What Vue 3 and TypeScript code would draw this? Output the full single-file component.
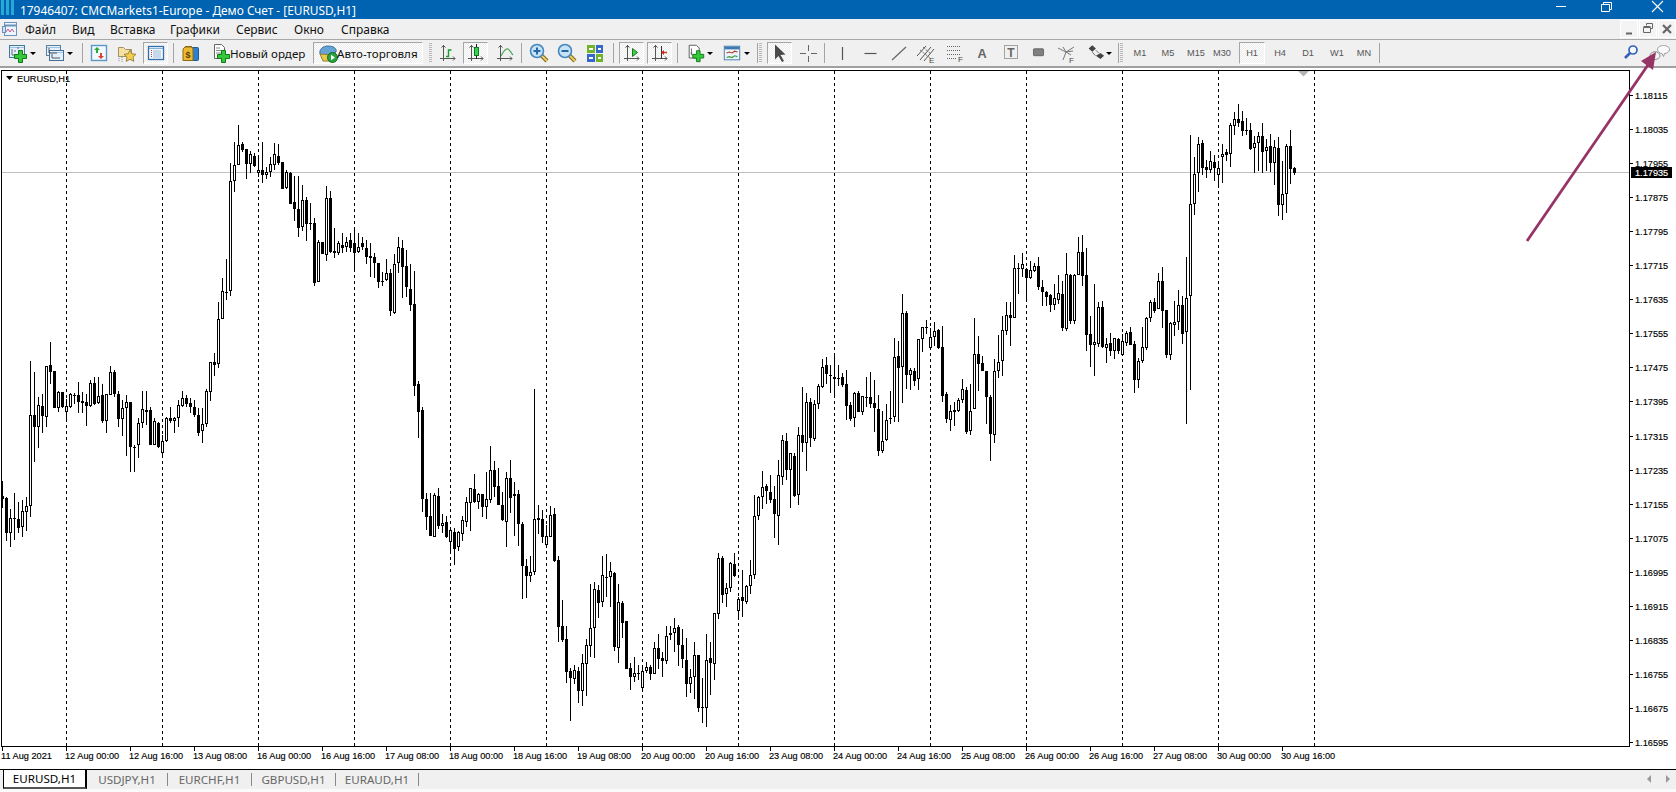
<script setup lang="ts">
type Row = [number, number, number, number, number]
type Crop = { y: number; rows: Row[] }

const crops: Crop[] = [
  { y: 110, rows: [
    [1113,1157,1167,1193,0],[1162,1165,1268,1292,0],[1198,1225,1270,1310,1],[1150,1225,1226,1290,1],[1175,1227,1253,1270,0],[1170,1202,1250,1280,1],[1160,1187,1205,1262,1],[753,916,1187,1220,1],[785,916,950,1055,0],[862,886,950,1013,1],
    [853,888,917,970,0],[767,768,920,950,1],[697,765,785,822,0],[783,783,895,895,0],[843,847,895,905,1],[845,847,890,895,0],[866,889,905,932,1],[850,852,890,895,1],[848,854,855,882,1],[816,856,875,908,0],
    [845,873,878,908,0],[853,877,887,947,0],[810,820,889,890,1],[800,820,882,885,0],[802,858,878,882,1],[823,855,933,940,0],[853,853,933,968,1],[769,787,854,854,1],[781,787,853,862,0],[842,853,928,952,0],
    [870,895,928,977,1],[855,877,895,1037,1],[877,877,1010,1085,0],[1005,1010,1013,1085,0],[925,940,1006,1043,1],[843,898,938,953,1],[843,901,905,945,0],[892,901,1004,1004,0],[925,934,1004,1004,1],[937,940,1010,1013,0],
    [975,994,1028,1040,1],[922,923,992,995,1],[892,923,933,940,0],[920,925,932,968,1],[870,886,925,950,1],[843,865,888,890,1],[855,865,882,890,0],[865,880,890,908,0],[870,892,914,922,0],[895,916,968,977,0],
    [895,943,962,1000,1],[838,844,941,950,1],[755,757,845,873,1],[730,755,765,797,0],[577,626,761,773,1],[505,542,626,626,1],[447,545,546,570,1],[158,212,542,558,1],[95,164,212,245,1],[45,106,164,166,1],
    [97,103,119,127,0],[117,118,161,207,0],[122,132,161,188,1],[130,137,167,172,0],[135,181,188,200,1],[97,181,194,218,0],[170,185,194,208,1],[142,163,185,200,1],[100,133,165,180,1],[103,139,158,165,0],
    [155,157,236,238,0],[180,187,233,236,1],[185,189,281,281,0],[197,277,296,332,0],[198,298,353,381,0],[225,271,350,362,1],[262,271,341,392,0],[278,340,341,360,0],[323,340,519,527,0],[390,397,515,515,1],
    [395,397,431,431,0],[228,265,434,453,1],[243,265,427,430,0],[355,424,428,443,0],[392,400,428,435,1],
  ] },
  { y: 250, rows: [
    [-50,-15,-5,8,0],[-40,-25,-10,5,1],[-50,-30,-5,5,0],[-70,-20,8,60,0],[-50,-10,5,10,1],[-40,-20,-10,0,0],[-30,-5,22,42,0],[-20,18,23,80,0],[10,22,40,83,0],[40,40,95,115,0],
    [67,92,95,107,0],[27,70,91,92,1],[57,70,182,197,0],[13,43,188,193,1],[-40,-10,40,70,1],[-30,-5,52,145,0],[0,48,112,140,0],[42,118,166,182,0],[63,163,407,437,0],[393,403,485,563,0],
    [472,481,748,785,0],[728,748,800,840,0],[728,799,857,857,0],[730,736,860,860,1],[714,739,827,836,0],[792,818,827,848,1],[797,817,862,865,0],[841,841,875,905,1],[835,847,896,945,0],[843,847,892,903,1],
    [797,811,851,873,1],[741,757,815,830,1],[714,715,760,842,1],[672,717,757,760,0],[730,733,755,777,1],[732,733,770,801,0],[666,748,770,807,1],[588,661,749,758,1],[633,661,710,740,0],[655,709,764,764,0],
    [727,764,810,813,0],[667,685,815,890,1],[630,685,743,790,0],[697,731,739,857,1],[720,733,822,887,0],[817,823,947,1048,0],[927,949,977,1043,0],[918,965,977,995,1],[417,808,965,975,1],[766,805,811,852,1],
    [780,808,860,878,0],[825,859,885,890,1],[768,796,860,862,1],[773,793,933,935,0],[918,931,1130,1175,0],[1050,1129,1170,1175,0],[1128,1168,1265,1298,0],[1255,1264,1283,1412,0],[1245,1261,1286,1302,1],[1250,1264,1322,1358,0],
    [1212,1240,1322,1367,1],[1167,1186,1241,1337,1],[1003,1135,1187,1220,1],[996,1018,1135,1223,1],[1005,1020,1058,1105,0],[918,976,1055,1071,1],[912,980,983,1040,0],[937,964,982,1070,1],[965,969,1190,1203,0],[1003,1057,1193,1238,1],
    [1052,1060,1118,1163,0],[1113,1113,1257,1258,0],[1240,1255,1280,1320,0],[1222,1268,1280,1297,1],[1245,1270,1271,1290,1],[1254,1264,1313,1322,1],[1235,1252,1262,1270,1],[1245,1252,1271,1290,0],[1175,1195,1271,1271,1],[1152,1195,1226,1257,0],
    [1207,1225,1232,1280,0],[1128,1157,1232,1242,1],[1127,1148,1154,1170,1],[1105,1133,1148,1205,1],[1125,1132,1184,1247,0],
  ] },
  { y: 280, rows: [
    [1048,1096,1138,1163,0],[1075,1141,1211,1250,0],[1167,1190,1211,1238,1],[1087,1126,1190,1257,1],[1124,1126,1285,1295,0],[1195,1282,1283,1328,1],[1063,1141,1285,1340,1],[1087,1134,1150,1245,0],[998,1000,1153,1200,1],[820,835,1003,1016,1],
    [828,835,946,968,0],[908,925,943,980,1],[847,848,923,935,1],[820,853,887,890,0],[950,958,994,1017,1],[870,952,964,1010,0],[915,919,965,972,1],[840,886,919,942,1],[645,707,886,896,1],[647,652,707,720,1],
    [573,622,652,687,1],[612,619,634,672,0],[585,637,659,668,0],[618,658,703,773,0],[540,586,707,795,1],[465,481,590,614,1],[460,484,569,600,0],[520,520,569,684,1],[520,529,648,650,0],[440,466,644,675,1],
    [321,466,490,516,0],[338,367,490,572,1],[353,367,475,500,0],[360,373,476,483,1],[312,319,373,387,1],[237,260,320,323,1],[232,256,281,312,0],[254,284,285,340,1],[228,292,298,350,1],[255,295,296,318,0],
    [278,292,315,320,0],[270,313,377,420,0],[365,376,416,422,0],[337,340,415,440,1],[334,340,395,395,0],[348,349,395,404,1],[292,352,353,380,1],[277,352,371,385,0],[300,370,385,455,0],[346,388,512,527,0],
    [393,482,512,520,1],[373,421,481,482,1],[333,415,418,431,0],[175,230,412,425,1],[183,229,263,425,0],[42,100,260,368,1],[94,100,284,327,0],[265,271,284,330,1],[265,274,302,318,0],[177,178,298,330,1],
    [140,141,178,215,1],[120,142,143,163,1],[145,170,204,206,1],[127,154,172,198,1],[148,151,204,206,0],[138,202,347,365,0],[335,343,416,428,0],[375,394,419,453,1],[365,389,395,437,1],[355,359,392,395,1],
    [297,328,359,368,1],[322,331,455,463,0],[312,394,452,465,1],[114,221,388,388,1],[168,223,251,333,0],[228,250,272,272,0],[273,274,352,431,0],[345,352,461,542,0],[238,274,466,490,1],[166,247,274,293,1],
  ] },
  { y: 95, rows: [
    [662,706,799,842,1],[620,661,709,720,1],[620,660,670,752,0],[480,520,670,670,1],[505,520,521,597,1],[475,508,523,545,1],[520,523,550,617,0],[498,526,549,552,1],[505,514,527,532,1],[487,514,575,585,0],
    [555,577,592,632,0],[588,592,605,632,0],[597,601,629,650,0],[567,610,629,645,1],[540,595,614,627,1],[558,598,698,707,0],[475,538,701,707,1],[538,541,677,687,0],[538,539,677,687,1],[426,472,539,540,1],
    [420,472,542,572,0],[459,541,719,768,0],[663,718,749,816,0],[567,742,749,842,1],[620,637,747,755,1],[618,637,757,758,0],[730,748,758,803,1],[713,745,767,782,0],[730,730,767,792,1],[730,733,767,777,0],
    [717,737,779,783,1],[708,715,743,752,1],[696,712,749,750,0],[737,748,855,893,0],[790,799,854,878,1],[697,757,797,803,1],[665,669,759,765,1],[615,622,670,680,1],[610,622,647,655,0],[535,558,641,641,1],
    [516,558,647,698,0],[645,646,780,790,0],[680,685,781,794,1],[618,680,689,722,1],[585,630,680,705,1],[604,630,716,746,0],[487,610,710,986,1],[120,328,602,885,1],[186,238,326,360,1],[126,146,233,290,1],
    [136,145,218,240,0],[195,217,224,250,0],[168,199,226,235,1],[180,202,219,258,0],[205,220,239,280,1],[148,176,185,265,1],[163,172,179,197,0],[83,91,176,215,1],[50,73,92,120,1],[28,73,83,95,0],
    [48,79,107,122,0],[70,106,107,120,1],[85,106,161,165,0],[122,145,158,233,1],[110,122,145,228,1],[85,124,170,233,0],[133,155,167,228,1],[118,154,203,232,0],[135,157,203,270,1],[125,160,329,362,0],
    [197,298,329,375,1],[147,154,298,353,1],[105,154,221,266,0],[215,220,233,240,0],
  ] },
]

let wickPath = ''
let fillPath = ''
let hollowPath = ''
let index = 0
for (const crop of crops) {
  const py = (v: number) => crop.y + Math.round(v / 3)
  for (const [hi, top, bot, lo, up] of crop.rows) {
    const x = 2 + 4 * index++
    const t = py(top)
    const h = Math.max(1, py(bot) - t)
    wickPath += `M${x + 0.5} ${py(hi)}V${py(lo)}`
    if (up && h > 1) hollowPath += `M${x - 0.5} ${t + 0.5}h2v${h - 1}h-2z`
    else fillPath += `M${x - 1} ${t}h3v${h}h-3z`
  }
}

const dashes = Array.from({ length: 14 }, (_, i) => 66.5 + 96 * i)

const timeLabels = ['11 Aug 2021', '12 Aug 00:00', '12 Aug 16:00', '13 Aug 08:00', '16 Aug 00:00', '16 Aug 16:00', '17 Aug 08:00', '18 Aug 00:00', '18 Aug 16:00', '19 Aug 08:00', '20 Aug 00:00', '20 Aug 16:00', '23 Aug 08:00', '24 Aug 00:00', '24 Aug 16:00', '25 Aug 08:00', '26 Aug 00:00', '26 Aug 16:00', '27 Aug 08:00', '30 Aug 00:00', '30 Aug 16:00']
  .map((text, i) => ({ text, x: 2 + 64 * i }))

const priceLabels = Array.from({ length: 20 }, (_, i) => ({
  text: (1.18115 - 0.0008 * i).toFixed(5),
  y: Math.round(95 + 34.05 * i),
}))

const menu = [
  { t: 'Файл', w: 47 }, { t: 'Вид', w: 38 }, { t: 'Вставка', w: 60 }, { t: 'Графики', w: 66 },
  { t: 'Сервис', w: 58 }, { t: 'Окно', w: 47 }, { t: 'Справка', w: 60 },
]
const tabs = [
  { t: 'USDJPY,H1', w: 81 }, { t: 'EURCHF,H1', w: 84 }, { t: 'GBPUSD,H1', w: 84 }, { t: 'EURAUD,H1', w: 83 },
]

const axes = '<path d="M6.5 3v16M3 16.5h15M4.5 5.5l2-2 2 2M16 14.5l2 2-2 2" stroke="#555" fill="none"/>'
const win = (x: number, y: number, w: number, h: number, c: string) =>
  `<rect x="${x}.5" y="${y}.5" width="${w}" height="${h}" fill="#e4f1fb" stroke="${c}"/><path d="M${x + 1} ${y + 2}.5h${w - 1}" stroke="#9cc4e4"/>`
const plus = (x: number, y: number) =>
  `<path d="M${x + 3.5} ${y + 0.5}h4v4h4v4h-4v4h-4v-4h-4v-4h4z" fill="#35c93a" stroke="#0e7a18"/>`
const lens = (inner: string) =>
  `<path d="M13 13l6 6" stroke="#7a6420" stroke-width="4"/><path d="M13 13l6 6" stroke="#f0cf60" stroke-width="2"/><circle cx="9" cy="9" r="6.5" fill="#c6e2f6" stroke="#4487bd" stroke-width="1.6"/><path d="${inner}" stroke="#2568a8" stroke-width="2" fill="none"/>`
const small = (t: string, x: number, y: number) =>
  `<text x="${x}" y="${y}" font-size="8" font-family="Liberation Sans" fill="#444">${t}</text>`

const icons: Record<string, string> = {
  newchart: win(3, 3, 15, 12, '#44799f') + '<path d="M6 7v6h8M8 9h2M11 6h2" stroke="#667" fill="none"/>' + plus(9, 8),
  profiles: win(3, 3, 14, 10, '#55829f') + win(6, 8, 14, 10, '#44709a') + '<path d="M6 6v5h8M9 12v4h8" stroke="#556" fill="none"/>',
  watch: '<rect x="3.5" y="3.5" width="15" height="15" fill="#f2f8fd" stroke="#5b9ac8" stroke-width="1.4"/><path d="M9 5l3 3h-2v3H8V8H6z" fill="#2aa83a"/><path d="M13 17l-3-3h2v-3h2v3h2z" fill="#d8452c"/>',
  star: '<path d="M2.5 5.5h5l2 2h6v7h-13z" fill="#f6e0a4" stroke="#a39362"/><path d="M3 14v5M6 15v5" stroke="#888" stroke-dasharray="1 1"/><path d="M14 8l1.8 3.8 4.2.5-3 2.9.8 4.1-3.8-2-3.8 2 .8-4.1-3-2.9 4.2-.5z" fill="#f6cc4c" stroke="#9b8540"/>',
  nav: '<rect x="3.5" y="4.5" width="15" height="13" fill="#f4f9fe" stroke="#2f6fae" stroke-width="1.3"/><path d="M4 6.5h14" stroke="#7fb0dc"/><path d="M6.5 8v8" stroke="#c33" stroke-dasharray="1 1"/><path d="M8 9h8M8 11h8M8 13h8M8 15h8" stroke="#99b8d8"/>',
  money: '<rect x="9.5" y="5.5" width="9" height="13" rx="1" fill="#2f7fd0" stroke="#1c5c9c"/><path d="M5 5h7l1 2v11.500H3V7z" fill="#eeb830" stroke="#8a6a14"/><path d="M5 4.500h7" stroke="#8a6a14"/><text x="8" y="16" text-anchor="middle" font-size="9" font-weight="700" font-family="Liberation Sans" fill="#5a4208">$</text>',
  order: '<path d="M4.500 2.500h7l3 3v11h-10z" fill="#fff" stroke="#666"/><path d="M6 6h4M6 8.500h7M6 11h6" stroke="#888"/>' + plus(8, 8),
  auto: '<path d="M3 12c-1-5 3-8 8-8s9 2 8 6c-2 2-12 4-16 2z" fill="#67a4d6" stroke="#3e6f9a"/><path d="M3 12l3 7h8l3-6z" fill="#e9c94d" stroke="#94802e"/><circle cx="15.500" cy="15.500" r="5" fill="#27a33d" stroke="#146a24"/><path d="M14 12.800l4 2.700-4 2.700z" fill="#fff"/>',
  bar: axes + '<path d="M9 14.500h2.500V8H14.500" stroke="#1a9a2a" stroke-width="1.4" fill="none"/>',
  candle: axes + '<path d="M11.500 2v15" stroke="#222"/><rect x="9.500" y="5.500" width="4" height="8" fill="#2fd64a" stroke="#137a24"/>',
  line: axes + '<path d="M7 14c3-6 5-8 7-7s3 4 5 6" stroke="#4aa45a" stroke-width="1.2" fill="none"/>',
  zoomin: lens('M5.500 9h7M9 5.500v7'),
  zoomout: lens('M5.500 9h7'),
  tile: '<rect x="3" y="3" width="8" height="8" fill="#6fb52a"/><rect x="12" y="3" width="7" height="8" fill="#3568c8"/><rect x="3" y="12" width="8" height="8" fill="#3568c8"/><rect x="12" y="12" width="7" height="8" fill="#6fb52a"/><path d="M5 6h4v2H5zM14 6h3v2h-3zM5 15h4v2H5zM14 15h3v2h-3z" fill="#fff"/>',
  scroll: axes + '<path d="M11.500 6.500l5 4-5 4z" fill="#3ed04a" stroke="#157a22"/>',
  shift: axes + '<path d="M12.500 4v13" stroke="#333"/><path d="M18 10.500h-5" stroke="#c8301e" stroke-width="1.4"/><path d="M12 10.500l3-2.500v5z" fill="#c8301e"/>',
  template: '<path d="M3.500 2.500h8l3 3v11h-11z" fill="#fff" stroke="#555"/><path d="M6 6v7h5M5 11h2" stroke="#666" fill="none"/>' + plus(8, 8),
  indicators: '<rect x="2.500" y="3.500" width="17" height="15" fill="#eef5fb" stroke="#3f78ad"/><path d="M3 5.500h16" stroke="#3f78ad" stroke-width="3"/><path d="M5 11l3-1 3 1 3-2 3 1" stroke="#b23a2a" stroke-width="1.2" fill="none"/><path d="M5 16l3-1 3 1 3-2 3 1" stroke="#3a9a3a" stroke-width="1.2" fill="none"/>',
  cursor: '<path d="M6 2.500l10.500 10-5 .5 3.500 6-2 1-3.500-6L6 17.500z" fill="#4a4a4a"/>',
  cross: '<path d="M11.500 3v6M11.500 14v6M3 11.500h6M14 11.500h6" stroke="#666"/>',
  vline: '<path d="M11.500 5v13" stroke="#555" stroke-width="1.2"/>',
  hline: '<path d="M4.500 11.500h12" stroke="#555" stroke-width="1.2"/>',
  trend: '<path d="M4 18L18 5" stroke="#666" stroke-width="1.2"/>',
  channel: '<path d="M2 14L11 4M5 18l11-13M9 19L19 7" stroke="#555"/><path d="M5 8l10 8M8 5l8 7" stroke="#555" stroke-dasharray="1 1"/>' + small('E', 14, 21),
  fib: '<path d="M3 4.500h13M3 8.500h13M3 12.500h13M3 16.500h10" stroke="#666" stroke-dasharray="1 1"/>' + small('F', 14, 20),
  atext: '<text x="11" y="17" text-anchor="middle" font-size="14" font-weight="700" font-family="Liberation Sans" fill="#666">A</text>',
  ttext: '<rect x="4.500" y="3.500" width="13" height="13" fill="none" stroke="#555" stroke-dasharray="1 1"/><text x="11" y="15" text-anchor="middle" font-size="12" font-weight="700" font-family="Liberation Sans" fill="#666">T</text>',
  rect: '<rect x="4.500" y="5.500" width="13" height="9" rx="1" fill="#808080" stroke="#555"/>',
  gann: '<path d="M3 6l8 4 8-5M11 10l7-1M11 10l5 3M11 10l-3 8M8 5l3 5" stroke="#777" fill="none"/>' + small('F', 14, 21),
  arrows: '<path d="M4 6l4-3.500L12 6 8 9.500z" fill="#444"/><path d="M12 14l5-3 4 3-4 3.500z" fill="#444"/><path d="M8 10l3.500 4M12 8l3 3" stroke="#666"/>',
  search: '<circle cx="13" cy="8" r="4" fill="#f4f8fd" stroke="#2f62b8" stroke-width="1.7"/><path d="M10 11L5 16" stroke="#2f62b8" stroke-width="2.600"/>',
  chat: '<path d="M2 14a5 4 0 0 1 10-.5c0 3-3 4-6 4l-3 2 .5-3C2.500 16.500 2 15.500 2 14z" fill="#f4f4f4" stroke="#888"/><path d="M9.500 7.500c0-2.500 3-4 6-4s6 1.500 6 4-3 4-5 4l-1 3-1.500-3c-2 0-4.500-1.500-4.500-4z" fill="#fafafa" stroke="#999"/>',
}

type Tool = { k: string; w: number; i?: string; on?: boolean; t?: string }
const sp = (w: number): Tool => ({ k: 'sp', w })
const sep = (): Tool => ({ k: 'sep', w: 1 })
const grip = (): Tool => ({ k: 'grip', w: 5 })
const dd = (w = 9): Tool => ({ k: 'dd', w })
const ic = (i: string, w: number, on = false): Tool => ({ k: 'ic', w, i, on })
const tf = (t: string, w: number, on = false): Tool => ({ k: 'tf', w, t, on })

const tools: Tool[] = [
  sp(5), ic('newchart', 23), dd(), sp(5), ic('profiles', 23), dd(), sp(8), sep(),
  ic('watch', 32), ic('star', 24), sp(4), ic('nav', 25, true), sp(5), sep(),
  ic('money', 33),
  { k: 'lab', w: 103, i: 'order', t: 'Новый ордер' }, sp(3),
  { k: 'lab', w: 110, i: 'auto', t: 'Авто-торговля', on: true }, sp(5), grip(),
  ic('bar', 30), ic('candle', 25, true), ic('line', 33), sep(),
  ic('zoomin', 34), ic('zoomout', 22), ic('tile', 34), sp(1), sep(), sp(5),
  ic('scroll', 25, true), sp(3), ic('shift', 25, true), sp(5), sep(),
  sp(8), ic('template', 20), dd(8), sp(8), ic('indicators', 20), sp(1), dd(8), sp(6), sep(), grip(), sp(4),
  ic('cursor', 25, true), ic('cross', 32), sep(),
  ic('vline', 34), ic('hline', 24), ic('trend', 31), ic('channel', 24), ic('fib', 34),
  ic('atext', 20), ic('ttext', 38), ic('rect', 17), ic('gann', 38), ic('arrows', 20), dd(8), sp(5), sep(), grip(),
  tf('M1', 32), tf('M5', 24), tf('M15', 32), tf('M30', 20), sp(7), tf('H1', 26, true),
  tf('H4', 30), tf('D1', 26), tf('W1', 32), tf('MN', 22), sp(4), sep(),
]
</script>

<template>
  <div class="app">
    <header class="title">
      <svg class="logo" width="15" height="19" viewBox="0 0 15 19">
        <path d="M1 0h3v15H1zM6 0h3v15H6zM11 0h3v15h-3z" fill="#27a9d8" />
      </svg>
      <span class="title-text">17946407: CMCMarkets1-Europe - Демо Счет - [EURUSD,H1]</span>
      <svg class="winctl" width="120" height="19" viewBox="0 0 120 19">
        <path d="M0 6.500h10" stroke="#fff" />
        <path d="M47.500 4.500v-2h8v7h-2M45.500 4.500h8v7h-8z" stroke="#fff" fill="none" />
        <path d="M96 1l11 11M107 1L96 12" stroke="#fff" stroke-width="1.100" />
      </svg>
    </header>

    <nav class="menu">
      <svg class="menu-icon" width="16" height="17" viewBox="0 0 16 17">
        <rect x="2.500" y="1.500" width="12" height="13" fill="#eef5fc" stroke="#6a93bb" />
        <path d="M3 4.500h11" stroke="#6a93bb" stroke-width="2" />
        <path d="M4 11l2-3 2 3 2-3 2 3" stroke="#c05a90" fill="none" />
        <rect x=".5" y="5.500" width="3" height="6" fill="#cfe2f3" stroke="#6a93bb" />
      </svg>
      <span v-for="m in menu" :key="m.t" class="menu-item" :style="{ width: m.w + 'px' }">{{ m.t }}</span>
      <div class="mdi">
        <button class="mdi-btn">
          <svg width="18" height="18" viewBox="0 0 18 18"><path d="M6 13.500h6" stroke="#666" stroke-width="2" /></svg>
        </button>
        <button class="mdi-btn">
          <svg width="18" height="18" viewBox="0 0 18 18"><path d="M7.500 5.500v-2h6v5h-2M4.500 7.500h7v5h-7zM4.500 6.500h7" stroke="#666" fill="none" /></svg>
        </button>
        <button class="mdi-btn">
          <svg width="18" height="18" viewBox="0 0 18 18"><path d="M5 5l8 8M13 5l-8 8" stroke="#666" stroke-width="2.200" /></svg>
        </button>
      </div>
    </nav>

    <div class="toolbar">
      <template v-for="(tool, n) in tools" :key="n">
        <span v-if="tool.k === 'sp'" :style="{ width: tool.w + 'px' }" class="spacer" />
        <span v-else-if="tool.k === 'sep'" class="sep" />
        <span v-else-if="tool.k === 'grip'" class="grip" />
        <span v-else-if="tool.k === 'dd'" class="dd" :style="{ width: tool.w + 'px' }"><i /></span>
        <span v-else-if="tool.k === 'ic'" class="tool" :class="{ on: tool.on }" :style="{ width: tool.w + 'px' }">
          <svg width="22" height="22" viewBox="0 0 22 22" v-html="icons[tool.i!]" />
        </span>
        <span v-else-if="tool.k === 'tf'" class="tool tf" :class="{ on: tool.on }" :style="{ width: tool.w + 'px' }">{{ tool.t }}</span>
        <span v-else class="tool lab" :class="{ on: tool.on }" :style="{ width: tool.w + 'px' }">
          <svg width="22" height="22" viewBox="0 0 22 22" v-html="icons[tool.i!]" />
          <span>{{ tool.t }}</span>
        </span>
      </template>
      <span class="grow" />
      <span class="tool"><svg width="22" height="22" viewBox="0 0 22 22" v-html="icons.search" /></span>
      <span class="tool chat"><svg width="24" height="22" viewBox="0 0 24 22" v-html="icons.chat" /></span>
    </div>

    <main class="chart">
      <svg width="1676" height="701" viewBox="0 68 1676 701" class="chart-svg">
        <path d="M1 172.500H1629" stroke="#c0c0c0" />
        <path v-for="x in dashes" :key="x" :d="`M${x} 71V746`" stroke="#000" stroke-dasharray="3 3" />
        <path :d="wickPath" stroke="#000" shape-rendering="crispEdges" />
        <path :d="fillPath" fill="#000" shape-rendering="crispEdges" />
        <path :d="hollowPath" fill="#fff" stroke="#000" shape-rendering="crispEdges" />
        <rect x="0" y="66" width="1" height="681" fill="#fff" />
        <path d="M1.500 70.500H1629.500V746.500H1.500Z" fill="none" stroke="#000" shape-rendering="crispEdges" />
        <path d="M1298 71h11l-5.500 5.500z" fill="#b4b4b4" />
        <path d="M6 76h7l-3.500 4z" fill="#000" />
        <text x="17" y="81.500" class="ax">EURUSD,H1</text>
        <g v-for="t in timeLabels" :key="t.x">
          <path :d="`M${t.x + 0.5} 746V751`" stroke="#000" />
          <text :x="t.x - 1" y="759" class="ax">{{ t.text }}</text>
        </g>
        <g v-for="p in priceLabels" :key="p.text">
          <path :d="`M1629 ${p.y + 0.5}h4`" stroke="#000" />
          <text x="1635" :y="p.y + 3.500" class="ax">{{ p.text }}</text>
        </g>
        <rect x="1631" y="167" width="41" height="11" fill="#000" />
        <text x="1635" y="176" class="ax bid">1.17935</text>
      </svg>
    </main>

    <footer class="tabs">
      <span class="tab active">EURUSD,H1</span>
      <span v-for="t in tabs" :key="t.t" class="tab" :style="{ width: t.w + 'px' }">{{ t.t }}</span>
      <span class="grow" />
      <svg class="scroller" width="30" height="19" viewBox="0 0 30 19">
        <path d="M5 5v8l-4-4zM20 5v8l4-4z" fill="#999" />
      </svg>
    </footer>
    <div class="tail" />

    <svg class="annot" width="1676" height="792" viewBox="0 0 1676 792">
      <path d="M1527 241L1650 62" stroke="#963466" stroke-width="2.800" fill="none" />
      <path d="M1656 52l-3 18-12-9z" fill="#963466" />
    </svg>
  </div>
</template>

<style>
html, body { margin: 0; background: #fff; }
</style>

<style scoped>
.app {
  position: relative;
  width: 1676px;
  height: 792px;
  overflow: hidden;
  display: flex;
  flex-direction: column;
  background: #f0f0f0;
  font-family: "Noto Sans", sans-serif;
  color: #111;
}
.title {
  height: 19px;
  flex: none;
  display: flex;
  align-items: center;
  background: #0063b1;
  color: #fff;
  font-size: 11.900px;
}
.logo { flex: none; }
.title-text { margin-left: 5px; flex: 1; white-space: nowrap; }
.winctl { flex: none; }
.menu {
  height: 20px;
  flex: none;
  display: flex;
  align-items: center;
  font-size: 12px;
  padding-left: 2px;
  border-bottom: 1px solid #a8a8a8;
}
.menu-icon { flex: none; margin-right: 7px; }
.menu-item { flex: none; white-space: nowrap; }
.mdi { margin-left: auto; display: flex; gap: 1px; }
.mdi-btn {
  width: 18px;
  height: 18px;
  padding: 0;
  border: 1px solid #fff;
  background: #f4f4f4;
  display: flex;
  align-items: center;
  justify-content: center;
}
.mdi-btn svg { flex: none; }
.toolbar {
  height: 26px;
  flex: none;
  display: flex;
  align-items: center;
  border-bottom: 2px solid #a0a0a0;
  font-size: 11.600px;
}
.spacer { flex: none; }
.sep { flex: none; width: 1px; height: 20px; background: #a4a4a4; }
.grip {
  flex: none;
  width: 5px;
  height: 20px;
  box-sizing: border-box;
  padding: 0 1px;
  background: repeating-linear-gradient(#b8b8b8 0 1px, #f0f0f0 1px 2px) content-box;
}
.dd { flex: none; display: flex; justify-content: center; align-items: center; }
.dd i { width: 0; height: 0; border: 3px solid transparent; border-top: 3px solid #000; border-bottom: 0; }
.tool {
  flex: none;
  height: 22px;
  display: flex;
  align-items: center;
  justify-content: center;
  box-sizing: border-box;
  white-space: nowrap;
}
.tool.on {
  border: 1px solid;
  border-color: #a6a6a6 #fff #fff #a6a6a6;
  background: conic-gradient(#fff 25%, #ececec 0 50%, #fff 0 75%, #ececec 0) 0 0 / 2px 2px;
}
.tf {
  font-family: "Liberation Sans", sans-serif;
  font-size: 9.200px;
  color: #555;
}
.lab { justify-content: flex-start; padding-left: 3px; color: #111; }
.lab svg { margin-right: -2px; }
.grow { flex: 1; }
.chat { margin: 0 4px 0 6px; }
.chart { height: 701px; flex: none; background: #fff; }
.chart-svg { display: block; }
.ax {
  font-family: "Liberation Sans", sans-serif;
  font-size: 9.200px;
  fill: #000;
  stroke: #000;
  stroke-width: 0.150px;
}
.bid { fill: #fff; stroke: #fff; }
.tabs {
  height: 19px;
  flex: none;
  display: flex;
  align-items: stretch;
  border-top: 1px solid #000;
  font-size: 11.600px;
  color: #666;
  padding-left: 3px;
}
.tab {
  width: 84px;
  box-sizing: border-box;
  display: flex;
  align-items: center;
  justify-content: center;
  white-space: nowrap;
  position: relative;
}
.tab + .tab { border-right: 1px solid #888; margin: 3px 0; }
.tab.active {
  background: #fff;
  color: #000;
  margin-top: -1px;
  border: 1px solid #000;
  border-right: 2px solid #000;
  border-bottom: 2px solid #555;
}
.scroller { align-self: center; }
.tail { flex: 1; background: #fafafa; }
.annot { position: absolute; left: 0; top: 0; pointer-events: none; }
</style>
